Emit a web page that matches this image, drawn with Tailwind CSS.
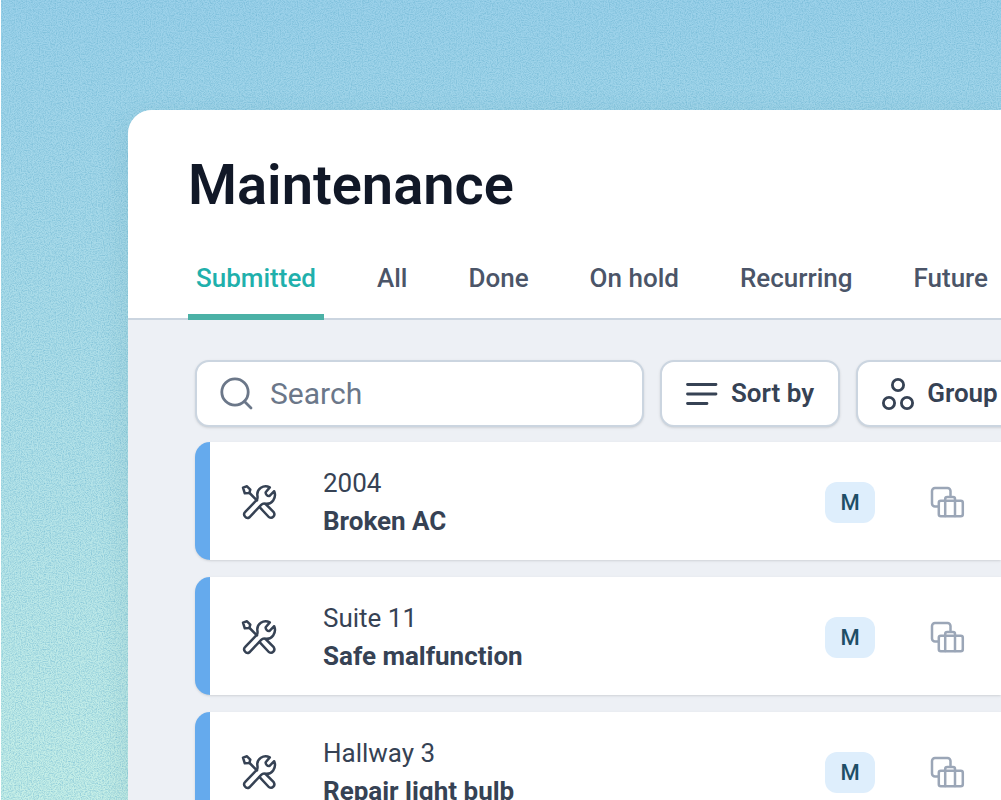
<!DOCTYPE html>
<html lang="en">
<head>
  <meta charset="UTF-8">
  <meta name="viewport" content="width=device-width, initial-scale=1.0">
  <title>Maintenance</title>
  <script src="https://cdn.jsdelivr.net/npm/@tailwindcss/browser@4"></script>
</head>
<body class="bg-white font-['Roboto','Liberation_Sans',sans-serif] text-[#364254]">
  <!-- shared icons -->
  <svg class="hidden">
    <symbol id="tools" viewBox="0 0 38 38" fill="none" stroke="currentColor" stroke-width="2.5" stroke-linecap="round" stroke-linejoin="round">
      <path d="M3 4.6 7 3.3 10.3 6.6 9.3 10 4.8 10.3Z"/>
      <path d="M9.6 10 17 17.4"/>
      <path d="M29.8 4.4C23.5 1.2 16.4 6 17.4 12.6c.2 1.6.5 2.9-.6 4.2L5 29.2c-2.4 2.4.9 7.5 4.4 5.2L21.2 21.8c1.2-1.2 2.4-1.4 4-1.1C31.8 21.8 36.9 15 34.2 8.2L29.6 12.8C27.8 13.6 25.2 11.2 25.7 9.2Z"/>
      <path d="M19.6 24.2 28.8 34c3.6 2.2 7-1.6 4.9-4.9L25.6 21"/>
    </symbol>
    <symbol id="luggage" viewBox="0 0 36 34" fill="none" stroke="currentColor" stroke-width="2.5" stroke-linecap="round" stroke-linejoin="round">
      <path d="M7.6 21.500H5a3 3 0 0 1-3-3V6a3 3 0 0 1 3-3h12.500a3 3 0 0 1 3 3v4.500"/>
      <rect x="8.800" y="15.800" width="24" height="15.500" rx="2"/>
      <path d="M15.200 16v15M25 16v15M15.200 15.800v-1.800a2 2 0 0 1 2-2h5.800a2 2 0 0 1 2 2v1.800"/>
    </symbol>
  </svg>

  <div class="relative h-screen overflow-hidden ml-px pl-[127px] pt-[110px] bg-linear-to-b from-[#9bd1ea] via-[#acdde9] via-40% to-[#c6efe7]">
    <!-- grain over the backdrop -->
    <svg class="absolute inset-0 w-full h-full" aria-hidden="true">
      <filter id="grain" x="0" y="0" width="100%" height="100%" color-interpolation-filters="sRGB">
        <feTurbulence type="fractalNoise" baseFrequency="0.83" numOctaves="2" seed="11"/>
        <feColorMatrix values="0 0 0 0 0.38  0 0 0 0 0.68  0 0 0 0 0.8  1.1 0 0 0 -0.4"/>
      </filter>
      <rect width="100%" height="100%" filter="url(#grain)"/>
    </svg>

    <main class="relative min-h-full rounded-tl-3xl bg-[#edf0f5] shadow-[0_10px_30px_rgba(60,110,130,0.14)]">
      <header class="rounded-tl-3xl bg-white border-b-2 border-[#cbd5e0] pl-[60px] pt-10">
        <h1 class="text-[56px] leading-[70px] font-semibold text-[#111827]">Maintenance</h1>
        <nav class="-mb-0.5 mt-[38px] flex gap-[45px] whitespace-nowrap text-[26px] leading-10 font-medium text-[#4b5568]">
          <a href="#" class="px-2 pb-4 border-b-6 border-[#4bb1a6] text-[#1fb0ac]">Submitted</a>
          <a href="#" class="px-2">All</a>
          <a href="#" class="px-2">Done</a>
          <a href="#" class="px-2">On hold</a>
          <a href="#" class="px-2">Recurring</a>
          <a href="#" class="px-2">Future</a>
        </nav>
      </header>

      <section class="overflow-hidden pl-[67px] pt-10">
        <div class="flex gap-4">
          <label class="flex w-[449px] h-[67px] shrink-0 items-center gap-[15px] rounded-[14px] border-2 border-[#cbd5e0] bg-white pl-[22px] shadow-sm">
            <svg class="size-9 text-[#6b7789]" viewBox="0 0 36 36" fill="none" stroke="currentColor" stroke-width="2.8" stroke-linecap="round" aria-hidden="true">
              <circle cx="16" cy="16" r="13.2"/>
              <path d="M25.5 25.5 32 32"/>
            </svg>
            <input type="search" aria-label="Search" placeholder="Search" class="w-80 text-[30px] leading-10 text-[#374151] outline-none placeholder:text-[#6b7789]">
          </label>
          <button class="flex h-[67px] shrink-0 items-center gap-[13px] rounded-[14px] border-2 border-[#cbd5e0] bg-white px-6 text-[26px] font-semibold shadow-sm">
            <svg class="w-8 h-6" viewBox="0 0 32 24" stroke="currentColor" stroke-width="2.8" stroke-linecap="round" aria-hidden="true">
              <path d="M1.5 2.500h28.500M1.500 12h28.500M1.500 21.500h19.500"/>
            </svg>
            Sort by
          </button>
          <button class="flex h-[67px] shrink-0 items-center gap-[13px] rounded-[14px] border-2 border-[#cbd5e0] bg-white px-6 text-[26px] font-semibold shadow-sm">
            <svg class="size-8" viewBox="0 0 32 32" fill="none" stroke="currentColor" stroke-width="2.8" aria-hidden="true">
              <circle cx="16" cy="7" r="5.6"/>
              <circle cx="7" cy="25" r="5.6"/>
              <circle cx="25" cy="25" r="5.6"/>
            </svg>
            Group
          </button>
        </div>

        <ul class="mt-[15px] space-y-[17px]">
          <li class="flex h-[118px] items-center rounded-l-[15px] border-l-15 border-[#65aaed] bg-white pt-0.5 shadow-sm">
            <svg class="ml-[30px] size-[38px] shrink-0" aria-hidden="true"><use href="#tools"/></svg>
            <div class="ml-[45px] w-[502px] shrink-0 text-[26px] leading-[38px]">
              <p>2004</p>
              <p class="font-bold">Broken AC</p>
            </div>
            <span class="flex w-[50px] h-[41px] shrink-0 items-center justify-center rounded-xl bg-[#deeefc] text-[22px] font-medium text-[#1f4e66]">M</span>
            <svg class="ml-[55px] w-9 h-[34px] shrink-0 text-[#9ba6b7]" aria-hidden="true"><use href="#luggage"/></svg>
          </li>
          <li class="flex h-[118px] items-center rounded-l-[15px] border-l-15 border-[#65aaed] bg-white pt-0.5 shadow-sm">
            <svg class="ml-[30px] size-[38px] shrink-0" aria-hidden="true"><use href="#tools"/></svg>
            <div class="ml-[45px] w-[502px] shrink-0 text-[26px] leading-[38px]">
              <p>Suite 11</p>
              <p class="font-bold">Safe malfunction</p>
            </div>
            <span class="flex w-[50px] h-[41px] shrink-0 items-center justify-center rounded-xl bg-[#deeefc] text-[22px] font-medium text-[#1f4e66]">M</span>
            <svg class="ml-[55px] w-9 h-[34px] shrink-0 text-[#9ba6b7]" aria-hidden="true"><use href="#luggage"/></svg>
          </li>
          <li class="flex h-[118px] items-center rounded-l-[15px] border-l-15 border-[#65aaed] bg-white pt-0.5 shadow-sm">
            <svg class="ml-[30px] size-[38px] shrink-0" aria-hidden="true"><use href="#tools"/></svg>
            <div class="ml-[45px] w-[502px] shrink-0 text-[26px] leading-[38px]">
              <p>Hallway 3</p>
              <p class="font-bold">Repair light bulb</p>
            </div>
            <span class="flex w-[50px] h-[41px] shrink-0 items-center justify-center rounded-xl bg-[#deeefc] text-[22px] font-medium text-[#1f4e66]">M</span>
            <svg class="ml-[55px] w-9 h-[34px] shrink-0 text-[#9ba6b7]" aria-hidden="true"><use href="#luggage"/></svg>
          </li>
        </ul>
      </section>
    </main>
  </div>
</body>
</html>
